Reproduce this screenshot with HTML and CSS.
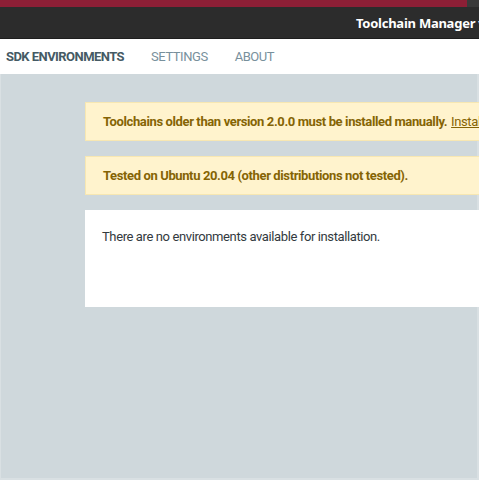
FILE: index.html
```html
<!DOCTYPE html>
<html>
<head>
<meta charset="utf-8">
<link rel="stylesheet" href="styles.css">
</head>
<body>
<div class="window">
  <div class="topstrip"><div class="strip-red"></div><div class="strip-gray"></div></div>
  <div class="titlebar"><span class="title">Toolchain Manager v1.0.0 - nRF Connect</span></div>
  <nav class="tabs">
    <span class="tab active">SDK ENVIRONMENTS</span>
    <span class="tab">SETTINGS</span>
    <span class="tab">ABOUT</span>
  </nav>
  <main class="content">
    <div class="alert">Toolchains older than version 2.0.0 must be installed manually. <a class="link" href="#">Installation instructions</a></div>
    <div class="alert">Tested on Ubuntu 20.04 (other distributions not tested).</div>
    <div class="card">There are no environments available for installation.</div>
  </main>
</div>
</body>
</html>
```
FILE: styles.css
```css
html, body {
  margin: 0;
  padding: 0;
  width: 479px;
  height: 480px;
  overflow: hidden;
}
body {
  font-family: Roboto, "Liberation Sans", sans-serif;
  background: #cfd8dc;
}
.window {
  display: flex;
  flex-direction: column;
  height: 480px;
  width: 479px;
  overflow: hidden;
}
.topstrip {
  display: flex;
  height: 7px;
  flex: none;
}
.strip-red {
  flex: 1;
  background: #8d1f36;
}
.strip-gray {
  width: 12px;
  background: #3a3a3a;
}
.titlebar {
  height: 32px;
  flex: none;
  background: #2c2c2c;
  border-bottom: 1px solid #1e1e1e;
  display: flex;
  align-items: center;
  padding-left: 356px;
  padding-top: 1px;
  box-sizing: border-box;
  white-space: nowrap;
  overflow: hidden;
}
.title {
  color: #ffffff;
  font-family: "Noto Sans", "DejaVu Sans", sans-serif;
  font-weight: bold;
  font-size: 13px;
  letter-spacing: -0.25px;
}
.tabs {
  height: 35px;
  flex: none;
  background: #ffffff;
  display: flex;
  align-items: center;
  padding-left: 6px;
  gap: 27px;
  white-space: nowrap;
}
.tab {
  font-size: 13px;
  letter-spacing: -0.45px;
  color: #78909c;
}
.tab.active {
  color: #455a64;
  font-weight: bold;
  letter-spacing: -0.55px;
}
.content {
  flex: 1;
  padding: 28px 0 0 84px;
  display: flex;
  flex-direction: column;
  gap: 15px;
  border-left: 1px solid #d9e0e3;
  border-right: 2px solid #d9e0e3;
  border-bottom: 2px solid #d9e0e3;
}
.alert {
  width: 640px;
  height: 39px;
  flex: none;
  box-sizing: border-box;
  background: #fff3cd;
  border: 1px solid #f7e7b2;
  color: #856404;
  font-weight: bold;
  font-size: 13px;
  letter-spacing: -0.38px;
  padding-left: 17px;
  display: flex;
  align-items: center;
  white-space: nowrap;
}
.link {
  color: #856404;
  font-weight: normal;
  text-decoration: underline;
  margin-left: 4px;
}
.card {
  width: 640px;
  height: 97px;
  flex: none;
  box-sizing: border-box;
  background: #ffffff;
  color: #333a40;
  font-size: 13px;
  letter-spacing: -0.39px;
  padding: 19px 0 0 17px;
  white-space: nowrap;
}
```
